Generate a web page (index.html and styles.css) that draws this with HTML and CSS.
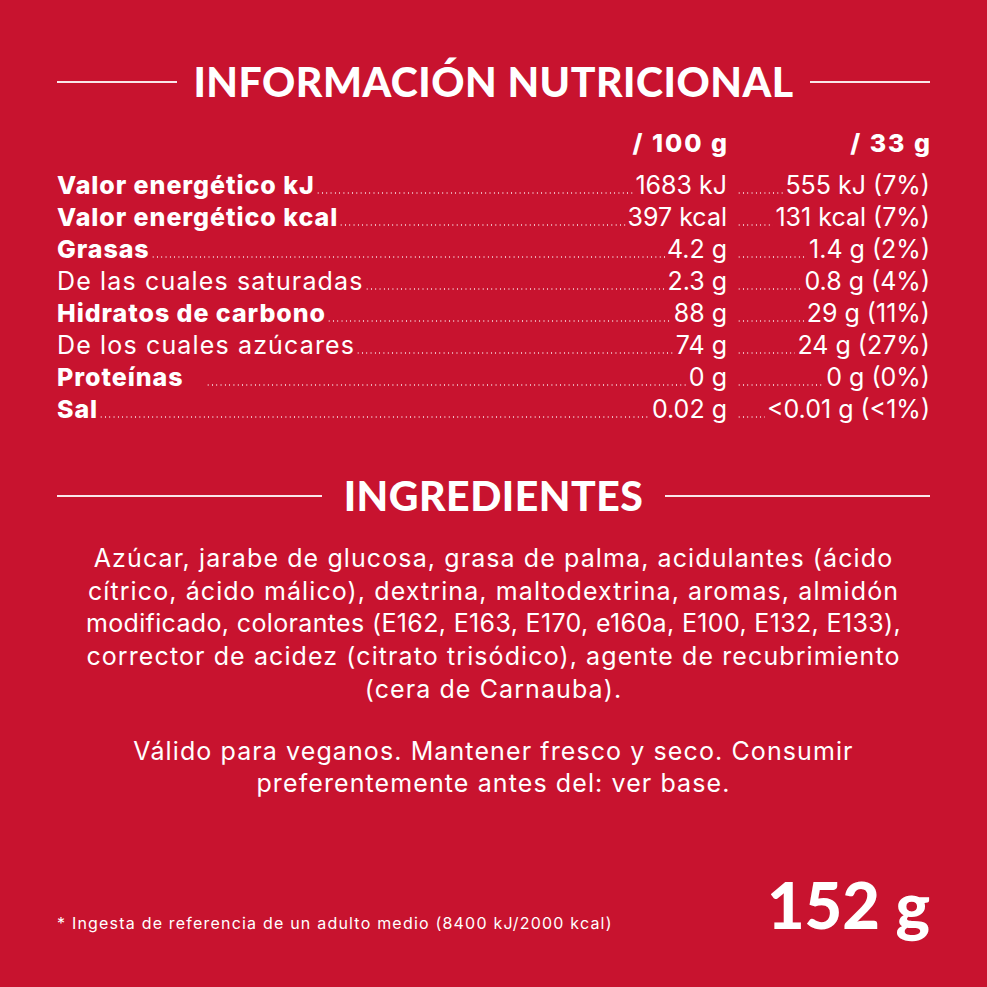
FILE: index.html
```html
<!DOCTYPE html>
<html lang="es">
<head>
<meta charset="utf-8">
<title>Información nutricional</title>
<link rel="stylesheet" href="styles.css">
</head>
<body>
<main class="panel">
  <h2 class="section-title title-nutri"><span class="rule"></span><span class="title-text">INFORMACIÓN NUTRICIONAL</span><span class="rule"></span></h2>

  <div class="table">
    <div class="row head">
      <div class="c1"><span class="val">/ 100 g</span></div>
      <div class="c2"><span class="val">/ 33 g</span></div>
    </div>
    <div class="row">
      <div class="c1"><span class="lbl b">Valor energético kJ</span><span class="dots"></span><span class="val">1683 kJ</span></div>
      <div class="c2"><span class="dots"></span><span class="val">555 kJ (7%)</span></div>
    </div>
    <div class="row">
      <div class="c1"><span class="lbl b">Valor energético kcal</span><span class="dots"></span><span class="val">397 kcal</span></div>
      <div class="c2"><span class="dots"></span><span class="val">131 kcal (7%)</span></div>
    </div>
    <div class="row">
      <div class="c1"><span class="lbl b">Grasas</span><span class="dots"></span><span class="val">4.2 g</span></div>
      <div class="c2"><span class="dots"></span><span class="val">1.4 g (2%)</span></div>
    </div>
    <div class="row">
      <div class="c1"><span class="lbl">De las cuales saturadas</span><span class="dots"></span><span class="val">2.3 g</span></div>
      <div class="c2"><span class="dots"></span><span class="val">0.8 g (4%)</span></div>
    </div>
    <div class="row">
      <div class="c1"><span class="lbl b">Hidratos de carbono</span><span class="dots"></span><span class="val">88 g</span></div>
      <div class="c2"><span class="dots"></span><span class="val">29 g (11%)</span></div>
    </div>
    <div class="row">
      <div class="c1"><span class="lbl">De los cuales azúcares</span><span class="dots"></span><span class="val">74 g</span></div>
      <div class="c2"><span class="dots"></span><span class="val">24 g (27%)</span></div>
    </div>
    <div class="row">
      <div class="c1"><span class="lbl b gap">Proteínas</span><span class="dots"></span><span class="val">0 g</span></div>
      <div class="c2"><span class="dots"></span><span class="val">0 g (0%)</span></div>
    </div>
    <div class="row">
      <div class="c1"><span class="lbl b">Sal</span><span class="dots"></span><span class="val">0.02 g</span></div>
      <div class="c2"><span class="dots"></span><span class="val">&lt;0.01 g (&lt;1%)</span></div>
    </div>
  </div>

  <h2 class="section-title title-ingr"><span class="rule"></span><span class="title-text">INGREDIENTES</span><span class="rule"></span></h2>

  <p class="ingredients">Azúcar, jarabe de glucosa, grasa de palma, acidulantes (ácido<br>cítrico, ácido málico), dextrina, maltodextrina, aromas, almidón<br><span class="tight">modificado, colorantes (E162, E163, E170, e160a, E100, E132, E133),</span><br>corrector de acidez (citrato trisódico), agente de recubrimiento<br>(cera de Carnauba).</p>

  <p class="ingredients notes">Válido para veganos. Mantener fresco y seco. Consumir<br>preferentemente antes del: ver base.</p>

  <footer class="foot">
    <span class="footnote">* Ingesta de referencia de un adulto medio (8400 kJ/2000 kcal)</span>
    <span class="weight">152 g</span>
  </footer>
</main>
</body>
</html>
```

FILE: styles.css
```css
html, body {
  margin: 0;
  padding: 0;
  background: #c8132f;
}
body {
  width: 987px;
  height: 987px;
  overflow: hidden;
  color: #fff;
  font-family: Inter, "Open Sans", sans-serif;
}
.panel {
  padding: 0 57px;
  display: flex;
  flex-direction: column;
}
.section-title {
  display: flex;
  align-items: center;
  margin: 0;
  font-family: Lato, sans-serif;
  font-weight: 900;
  font-size: 41px;
  line-height: 50px;
  letter-spacing: 0.5px;
}
.title-nutri { margin-top: 57px; }
.title-nutri .title-text { margin: 0 16px; }
.title-ingr { margin-top: 46px; }
.title-ingr .title-text { margin: 0 22px; }
.rule {
  flex: 1;
  height: 2px;
  background: rgba(255,255,255,0.9);
}
.table {
  display: flex;
  flex-direction: column;
  margin-top: 20px;
}
.row {
  display: grid;
  grid-template-columns: 1fr 203px;
  height: 32px;
  font-size: 25px;
  line-height: 32px;
  font-weight: 400;
}
.row.head {
  font-weight: 800;
  height: 42px;
  letter-spacing: 2px;
}
.row.head .val { margin-right: -2px; }
.c1, .c2 {
  display: flex;
  align-items: baseline;
  justify-content: flex-end;
}
.lbl { white-space: nowrap; letter-spacing: 1.15px; }
.lbl.b { font-weight: 800; letter-spacing: 0.95px; }
.lbl.gap { margin-right: 22px; }
.val { white-space: nowrap; }
.dots {
  flex: 1;
  height: 2px;
  margin: 0 2px 0 1px;
  background-image: radial-gradient(circle, rgba(255,255,255,0.7) 0.7px, transparent 1px);
  background-size: 4.3px 2px;
  background-repeat: repeat-x;
}
.c2 .dots { margin-left: 10px; }
.ingredients {
  margin: 21px 0 0;
  text-align: center;
  font-size: 25px;
  line-height: 32.7px;
  font-weight: 400;
  letter-spacing: 1.1px;
}
.ingredients .tight { letter-spacing: 0.35px; }
.ingredients.notes { margin-top: 29px; }
.foot {
  margin-top: 69px;
  display: flex;
  justify-content: space-between;
  align-items: baseline;
}
.footnote {
  font-size: 16px;
  letter-spacing: 1.2px;
}
.weight {
  font-family: Lato, sans-serif;
  font-weight: 900;
  font-size: 65px;
  line-height: 70px;
}
```
